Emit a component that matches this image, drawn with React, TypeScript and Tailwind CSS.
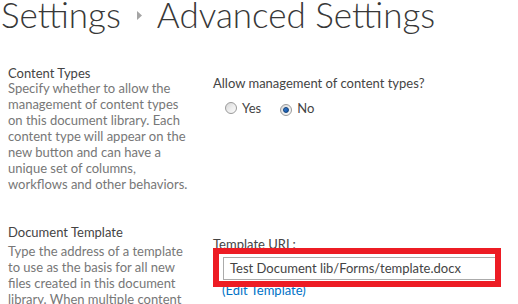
import React from "react";

function Radio({ checked }: { checked?: boolean }) {
  return (
    <span className="relative inline-flex h-[12px] w-[12px] items-center justify-center rounded-full border border-[#9a9a9a] bg-gradient-to-br from-[#d6d6d6] via-[#ececec] to-[#fbfbfb]">
      {checked && (
        <span className="h-[6px] w-[6px] rounded-full border border-[#0e3f78] bg-gradient-to-br from-[#3a7bd0] to-[#0c56a8]" />
      )}
    </span>
  );
}

export default function App() {
  return (
    <div className="h-[304px] w-[518px] overflow-hidden bg-white font-['Segoe_UI','Lato',sans-serif]">
      <h1 className="-mt-[1px] flex items-center whitespace-nowrap pl-[1px] font-['Lato_Light','Lato',sans-serif] text-[35px] font-light leading-[30px] text-[#383838]">
        <span>Settings</span>
        <svg className="ml-[16px] mr-[15px] mt-[3px] h-[9px] w-[5px]" viewBox="0 0 5 9">
          <path d="M0 0 L5 4.5 L0 9 Z" fill="#a5a5a5" />
        </svg>
        <span>Advanced Settings</span>
      </h1>

      <div className="mt-[36px] grid grid-cols-[213px_1fr]">
        {/* Content types */}
        <div className="pl-[8px] pr-[24px]">
          <h3 className="text-[13px] leading-[16px] text-[#444]">Content Types</h3>
          <p className="-mt-[1px] text-[13px] leading-[16px] text-[#777]">
            Specify whether to allow the management of content types on this document library. Each content type will
            appear on the new button and can have a unique set of columns, workflows and other behaviors.
          </p>
        </div>
        <div className="pt-[10px]">
          <div className="text-[13px] leading-[16px] text-[#444]">Allow management of content types?</div>
          <div className="mt-[9px] flex items-center pl-[12px] text-[13px] leading-[16px] text-[#444]">
            <Radio />
            <span className="ml-[5px]">Yes</span>
            <span className="ml-[19px]">
              <Radio checked />
            </span>
            <span className="ml-[5px]">No</span>
          </div>
        </div>

        {/* Document template */}
        <div className="pl-[8px] pr-[24px] pt-[32px]">
          <h3 className="text-[13px] leading-[16px] text-[#444]">Document Template</h3>
          <p className="mt-[3px] text-[13px] leading-[16px] text-[#777]">
            Type the address of a template to use as the basis for all new files created in this document library. When
            multiple content types are enabled, this setting is managed on a per content type basis.
          </p>
        </div>
        <div className="pt-[44px]">
          <div className="text-[13px] leading-[16px] text-[#444]">Template URL:</div>
          <div className="relative -mt-[4px] w-[288px] overflow-hidden pl-[10px] pt-[9px] pb-[7px]">
            <div className="h-[23px] w-[320px] border border-[#ababab] bg-white pl-[6px] text-[13px] leading-[21px] text-[#444]">
              Test Document lib/Forms/template.docx
            </div>
            <div className="pointer-events-none absolute inset-0 border-[6px] border-[#ed1c24]" />
          </div>
          <a className="-mt-[5px] ml-[9px] block text-[13px] leading-[16px] text-[#0072c6]">(Edit Template)</a>
        </div>
      </div>
    </div>
  );
}
